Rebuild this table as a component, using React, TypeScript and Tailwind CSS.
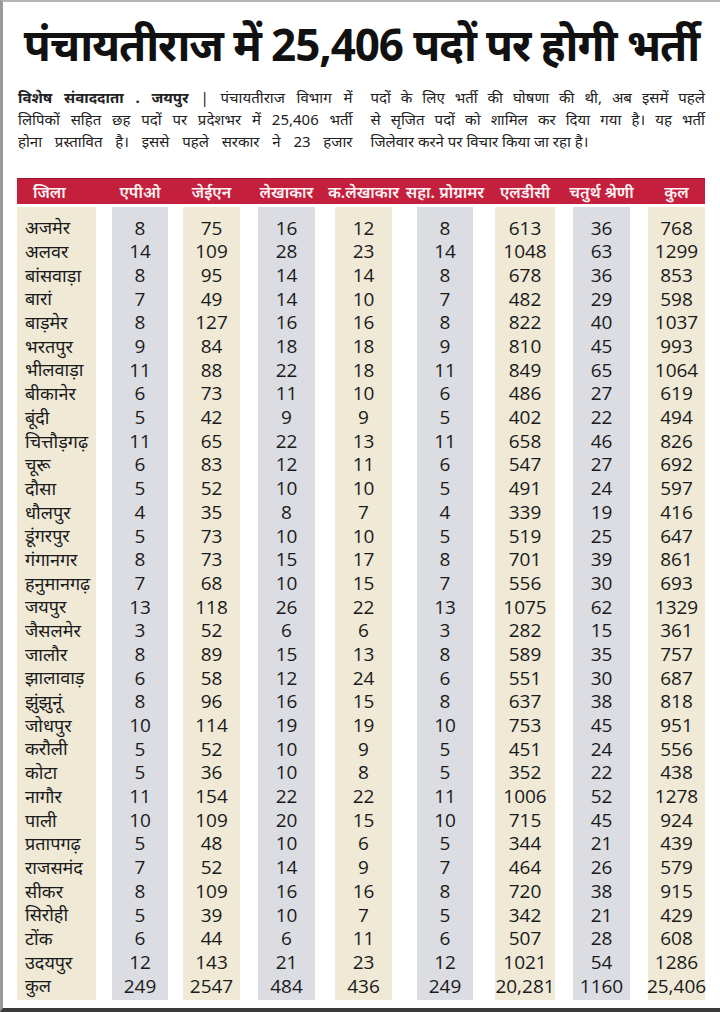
import React from 'react';

const cols = [
  { key: 'district', label: 'जिला', w: 'w-[79px]', ml: 'ml-0', bg: 'bg-[#efe9d6]' },
  { key: 'apo', label: 'एपीओ', w: 'w-[56px]', ml: 'ml-[16px]', bg: 'bg-[#dcdde2]' },
  { key: 'jen', label: 'जेईएन', w: 'w-[57px]', ml: 'ml-[15px]', bg: 'bg-[#efe9d6]' },
  { key: 'lekh', label: 'लेखाकार', w: 'w-[57px]', ml: 'ml-[18px]', bg: 'bg-[#dcdde2]' },
  { key: 'klekh', label: 'क.लेखाकार', w: 'w-[57px]', ml: 'ml-[20px]', bg: 'bg-[#efe9d6]' },
  { key: 'prog', label: 'सहा. प्रोग्रामर', w: 'w-[56px]', ml: 'ml-[25px]', bg: 'bg-[#dcdde2]' },
  { key: 'ldc', label: 'एलडीसी', w: 'w-[60px]', ml: 'ml-[22px]', bg: 'bg-[#efe9d6]' },
  { key: 'ch', label: 'चतुर्थ श्रेणी', w: 'w-[57px]', ml: 'ml-[18px]', bg: 'bg-[#dcdde2]' },
  { key: 'kul', label: 'कुल', w: 'w-[57px]', ml: 'ml-[18px]', bg: 'bg-[#efe9d6]' },
];

const rows: (string | number)[][] = [
  ['अजमेर', 8, 75, 16, 12, 8, 613, 36, 768],
  ['अलवर', 14, 109, 28, 23, 14, 1048, 63, 1299],
  ['बांसवाड़ा', 8, 95, 14, 14, 8, 678, 36, 853],
  ['बारां', 7, 49, 14, 10, 7, 482, 29, 598],
  ['बाड़मेर', 8, 127, 16, 16, 8, 822, 40, 1037],
  ['भरतपुर', 9, 84, 18, 18, 9, 810, 45, 993],
  ['भीलवाड़ा', 11, 88, 22, 18, 11, 849, 65, 1064],
  ['बीकानेर', 6, 73, 11, 10, 6, 486, 27, 619],
  ['बूंदी', 5, 42, 9, 9, 5, 402, 22, 494],
  ['चित्तौड़गढ़', 11, 65, 22, 13, 11, 658, 46, 826],
  ['चूरू', 6, 83, 12, 11, 6, 547, 27, 692],
  ['दौसा', 5, 52, 10, 10, 5, 491, 24, 597],
  ['धौलपुर', 4, 35, 8, 7, 4, 339, 19, 416],
  ['डूंगरपुर', 5, 73, 10, 10, 5, 519, 25, 647],
  ['गंगानगर', 8, 73, 15, 17, 8, 701, 39, 861],
  ['हनुमानगढ़', 7, 68, 10, 15, 7, 556, 30, 693],
  ['जयपुर', 13, 118, 26, 22, 13, 1075, 62, 1329],
  ['जैसलमेर', 3, 52, 6, 6, 3, 282, 15, 361],
  ['जालौर', 8, 89, 15, 13, 8, 589, 35, 757],
  ['झालावाड़', 6, 58, 12, 24, 6, 551, 30, 687],
  ['झुंझुनूं', 8, 96, 16, 15, 8, 637, 38, 818],
  ['जोधपुर', 10, 114, 19, 19, 10, 753, 45, 951],
  ['करौली', 5, 52, 10, 9, 5, 451, 24, 556],
  ['कोटा', 5, 36, 10, 8, 5, 352, 22, 438],
  ['नागौर', 11, 154, 22, 22, 11, 1006, 52, 1278],
  ['पाली', 10, 109, 20, 15, 10, 715, 45, 924],
  ['प्रतापगढ़', 5, 48, 10, 6, 5, 344, 21, 439],
  ['राजसमंद', 7, 52, 14, 9, 7, 464, 26, 579],
  ['सीकर', 8, 109, 16, 16, 8, 720, 38, 915],
  ['सिरोही', 5, 39, 10, 7, 5, 342, 21, 429],
  ['टोंक', 6, 44, 6, 11, 6, 507, 28, 608],
  ['उदयपुर', 12, 143, 21, 23, 12, 1021, 54, 1286],
  ['कुल', 249, 2547, 484, 436, 249, '20,281', 1160, '25,406'],
];

const leftLines = [
  <><b className="font-bold">विशेष संवाददाता . जयपुर</b> | पंचायतीराज विभाग में</>,
  <>लिपिकों सहित छह पदों पर प्रदेशभर में 25,406 भर्ती</>,
  <>होना प्रस्तावित है। इससे पहले सरकार ने 23 हजार</>,
];

const rightLines = [
  'पदों के लिए भर्ती की घोषणा की थी, अब इसमें पहले',
  'से सृजित पदों को शामिल कर दिया गया है। यह भर्ती',
  'जिलेवार करने पर विचार किया जा रहा है।',
];

function App() {
  return (
    <div className="w-[720px] h-[1012px] bg-white border-l-[3px] border-[#9a9a9a] border-t-2 border-t-[#b5b5b5] border-b-[4px] border-b-[#3a3a3a] overflow-hidden text-[#1a1a1a] font-['Noto_Sans',sans-serif]">
      <h1 className="text-center text-[44px] font-bold leading-[60px] pt-[12px] tracking-tight text-[#111]">
        पंचायतीराज में 25,406 पदों पर होगी भर्ती
      </h1>

      <div className="grid grid-cols-2 gap-x-[18px] px-[15px] pt-[12px] text-[15px] leading-[22px] text-[#222]">
        <div>
          {leftLines.map((l, i) => (
            <div key={i} className="text-justify [text-align-last:justify] whitespace-nowrap">{l}</div>
          ))}
        </div>
        <div>
          {rightLines.map((l, i) => (
            <div key={i} className={i < 2 ? 'text-justify [text-align-last:justify] whitespace-nowrap' : 'whitespace-nowrap'}>{l}</div>
          ))}
        </div>
      </div>

      <div className="pl-[14px] pt-[26px]">
        <div className="w-[688px] h-[26px] bg-[#c41f3d] border-t border-[#a0122c] flex items-center text-[#fdf3f3] text-[16px] font-semibold">
          {cols.map((c, i) => (
            <div key={c.key} className={`${c.w} ${c.ml} flex ${i === 0 ? 'justify-start pl-[16px]' : 'justify-center'} whitespace-nowrap`}>
              {c.label}
            </div>
          ))}
        </div>

        <div className="flex mt-[3px]">
          {cols.map((c, ci) => (
            <div key={c.key} className={`${c.w} ${c.ml} ${c.bg} pt-[9px] pb-[2px] flex flex-col`}>
              {rows.map((r, ri) => (
                <div
                  key={ri}
                  className={`h-[23.7px] flex items-center whitespace-nowrap ${ci === 0 ? "justify-start pl-[8px] text-[18px] font-['Noto_Sans',sans-serif]" : "justify-center text-[19px] font-['Open_Sans',sans-serif]"}`}
                >
                  {r[ci]}
                </div>
              ))}
            </div>
          ))}
        </div>
      </div>
    </div>
  );
}

export default App;
